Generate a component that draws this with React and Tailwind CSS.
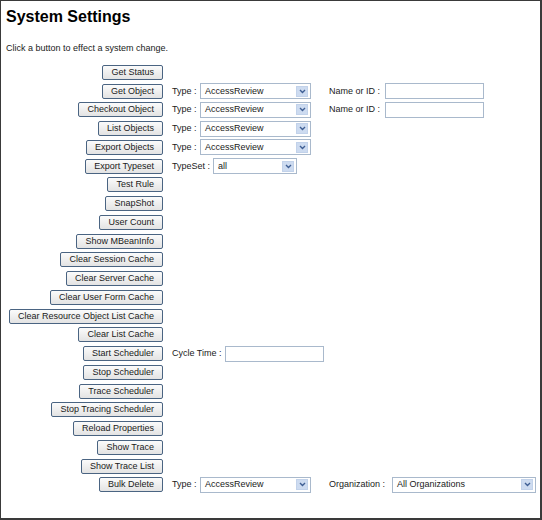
import React from 'react';

const font = { fontFamily: '"Liberation Sans", Arial, sans-serif' };

function Btn({ children }) {
  return (
    <button className="h-[15px] px-[8px] border border-[#4a6482] rounded-[2px] bg-gradient-to-b from-[#fbfbfb] to-[#e3e3e3] text-[9px] leading-none text-[#1a1a1a] whitespace-nowrap">
      {children}
    </button>
  );
}

function Select({ value, width }) {
  return (
    <div
      className="h-[16px] border border-[#a9b9cc] bg-white flex items-center justify-between pl-[4px] pr-[2px]"
      style={{ width }}
    >
      <span className="text-[9px] leading-none text-[#1a1a1a] whitespace-nowrap">{value}</span>
      <span className="w-[12px] h-[11px] bg-[#cddbf0] border border-[#c2d2ea] flex items-center justify-center">
        <svg width="7" height="5" viewBox="0 0 7 5">
          <path d="M1 1 L3.5 3.5 L6 1" stroke="#3f5f94" strokeWidth="1.4" fill="none" />
        </svg>
      </span>
    </div>
  );
}

function Input({ width }) {
  return <div className="h-[16px] border border-[#a9b9cc] bg-white" style={{ width }} />;
}

function Label({ children, width }) {
  return (
    <span className="text-[9px] leading-none text-[#1a1a1a] whitespace-nowrap" style={{ width }}>
      {children}
    </span>
  );
}

const typeSel = (
  <>
    <Label width={28}>Type :</Label>
    <Select value="AccessReview" width={111} />
  </>
);

const rows = [
  { b: 'Get Status' },
  {
    b: 'Get Object',
    c: (
      <>
        {typeSel}
        <span className="ml-[18px]" />
        <Label width={56}>Name or ID :</Label>
        <Input width={99} />
      </>
    ),
  },
  {
    b: 'Checkout Object',
    c: (
      <>
        {typeSel}
        <span className="ml-[18px]" />
        <Label width={56}>Name or ID :</Label>
        <Input width={99} />
      </>
    ),
  },
  { b: 'List Objects', c: typeSel },
  { b: 'Export Objects', c: typeSel },
  {
    b: 'Export Typeset',
    c: (
      <>
        <Label width={41}>TypeSet :</Label>
        <Select value="all" width={84} />
      </>
    ),
  },
  { b: 'Test Rule' },
  { b: 'SnapShot' },
  { b: 'User Count' },
  { b: 'Show MBeanInfo' },
  { b: 'Clear Session Cache' },
  { b: 'Clear Server Cache' },
  { b: 'Clear User Form Cache' },
  { b: 'Clear Resource Object List Cache' },
  { b: 'Clear List Cache' },
  {
    b: 'Start Scheduler',
    c: (
      <>
        <Label width={53}>Cycle Time :</Label>
        <Input width={99} />
      </>
    ),
  },
  { b: 'Stop Scheduler' },
  { b: 'Trace Scheduler' },
  { b: 'Stop Tracing Scheduler' },
  { b: 'Reload Properties' },
  { b: 'Show Trace' },
  { b: 'Show Trace List' },
  {
    b: 'Bulk Delete',
    c: (
      <>
        {typeSel}
        <span className="ml-[18px]" />
        <Label width={63}>Organization :</Label>
        <Select value="All Organizations" width={144} />
      </>
    ),
  },
];

export default function App() {
  return (
    <div
      className="w-[542px] h-[520px] bg-white border-t border-l border-r-2 border-b-2 border-[#3a3a3a] pl-[5px] pt-[6px] overflow-hidden"
      style={font}
    >
      <h1 className="text-[16px] leading-[20px] font-bold text-black">System Settings</h1>
      <p className="mt-[15px] text-[9px] leading-[12px] text-[#1a1a1a]">Click a button to effect a system change.</p>
      <div className="mt-[9px] grid grid-cols-[157px_1fr] gap-x-[9px]">
        {rows.map((r) => (
          <React.Fragment key={r.b}>
            <div className="h-[18.75px] flex items-center justify-end">
              <Btn>{r.b}</Btn>
            </div>
            <div className="h-[18.75px] flex items-center">{r.c}</div>
          </React.Fragment>
        ))}
      </div>
    </div>
  );
}
